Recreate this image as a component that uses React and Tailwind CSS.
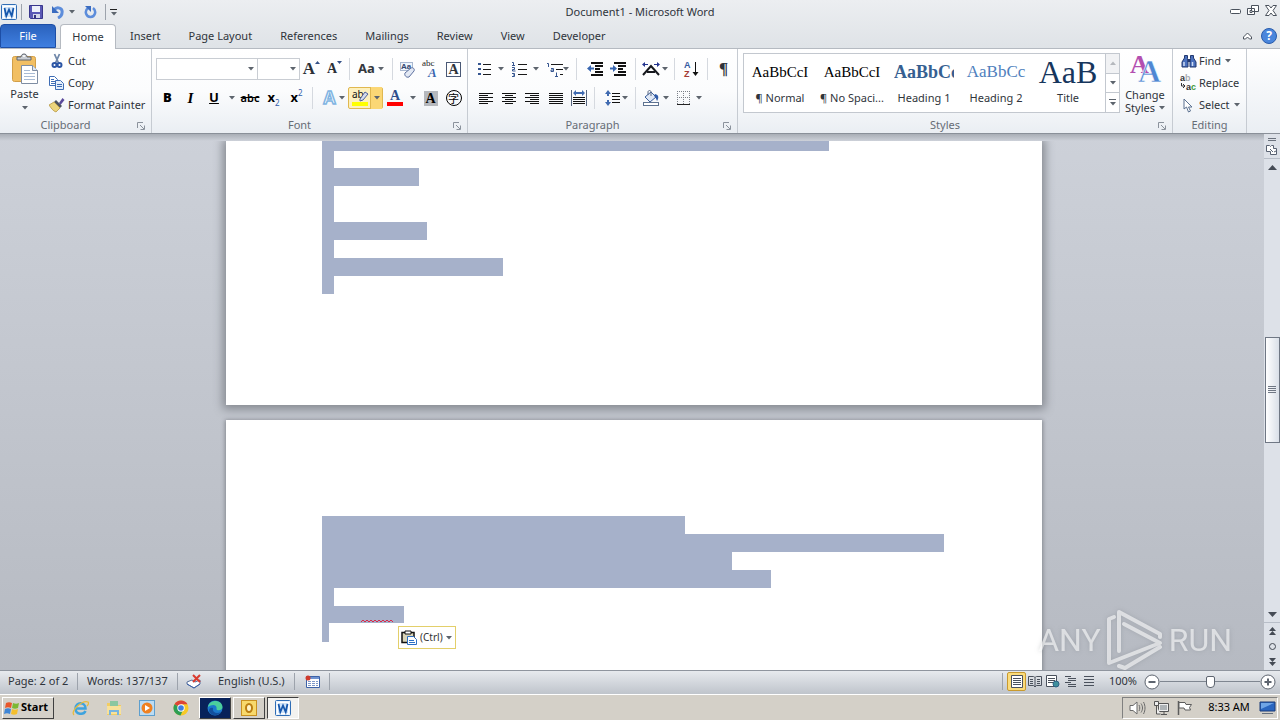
import React from "react";
import clsx from "clsx";

const TABS = ["Insert", "Page Layout", "References", "Mailings", "Review", "View", "Developer"];

// selected lines of the document, in px
const PAGE_ONE = [
  { h: 10, w: 507 },
  { h: 17, w: 12 },
  { h: 18, w: 97 },
  { h: 36, w: 12 },
  { h: 18, w: 105 },
  { h: 18, w: 12 },
  { h: 18, w: 181 },
  { h: 18, w: 12 },
];

const PAGE_TWO = [
  { h: 18, w: 363 },
  { h: 18, w: 622 },
  { h: 18, w: 410 },
  { h: 18, w: 449 },
  { h: 18, w: 12 },
  { h: 17, w: 82, typo: true },
  { h: 19, w: 7 },
];

const STYLES = [
  { name: "¶ Normal", sample: "AaBbCcI", cls: "justify-center text-[15px] text-black" },
  { name: "¶ No Spaci...", sample: "AaBbCcI", cls: "justify-center text-[15px] text-black" },
  { name: "Heading 1", sample: "AaBbCc", cls: "text-[18px] font-bold text-[#365f91]" },
  { name: "Heading 2", sample: "AaBbCc", cls: "justify-center text-[17px] text-[#4f81bd]" },
  { name: "Title", sample: "AaB", cls: "justify-center text-[32px] text-[#17365d]" },
];

const Caret = ({ className = "" }) => (
  <svg width="6" height="4" viewBox="0 0 6 4" className={clsx("shrink-0", className)}>
    <path d="M0 0h6L3 3.5z" fill="#5d646d" />
  </svg>
);

const Sep = ({ className }) => <span className={clsx("h-[22px] w-px shrink-0 bg-[#d5d9df]", className)} />;

const Tool = ({ label, className = "w-[23px]", children }) => (
  <button type="button" aria-label={label} className={clsx("flex h-[22px] shrink-0 items-center justify-center", className)}>
    {children}
  </button>
);

const Group = ({ title, launcher, className, children }) => (
  <section
    aria-label={title}
    className={clsx("flex shrink-0 flex-col border-r border-[#c6cbd2] bg-linear-to-b from-white via-[#fbfcfd] to-[#eaeef3]", className)}
  >
    <div className="flex h-[68px]">{children}</div>
    <div className="flex h-4 items-center pt-px text-[#666c75]">
      <span className="flex-1 text-center">{title}</span>
      {launcher && (
        <button type="button" aria-label={title + " options"} className="flex w-5 justify-center">
          <svg width="8" height="8" viewBox="0 0 8 8" fill="none" stroke="#8b929c">
            <path d="M.5 6V.5H6M3 3l4 4M7.500 3.500v4h-4" />
          </svg>
        </button>
      )}
    </div>
  </section>
);

const WordIcon = ({ size = 16 }) => (
  <svg width={size} height={size} viewBox="0 0 16 16">
    <rect x=".5" y=".5" width="15" height="15" rx="1" fill="#e9f3fd" stroke="#2f6db5" />
    <path d="M2.500 2.500h11v11h-11z" fill="#cfe3f8" stroke="#fff" />
    <path d="M3.500 4l1.800 8L8 5.500l2.700 6.500 1.800-8" fill="none" stroke="#1658ad" strokeWidth="1.800" />
  </svg>
);

const SaveIcon = () => (
  <svg width="14" height="14" viewBox="0 0 14 14">
    <path d="M.5.5h13v13h-12l-1-1z" fill="#5a58b5" stroke="#39378c" />
    <path d="M3 1h8v6H3z" fill="#eef1fa" />
    <path d="M4 9h7v4H4z" fill="#d5d8ea" />
    <path d="M5 10h2v3H5z" fill="#33317d" />
  </svg>
);

const UndoIcon = () => (
  <svg width="14" height="14" viewBox="0 0 14 14">
    <path d="M3 5c3-4 9-2 8 3 0 3-2 4-4 5" fill="none" stroke="#5d8ddb" strokeWidth="3" />
    <path d="M1 1v7h7z" fill="#3b6cc0" />
  </svg>
);

const RedoIcon = () => (
  <svg width="13" height="14" viewBox="0 0 13 14">
    <path d="M9 3c4 3 2 9-2.500 9S0 6 4 3" fill="none" stroke="#5d8ddb" strokeWidth="2.500" />
    <path d="M1 1h6v6z" fill="#3b6cc0" />
  </svg>
);

const PasteIcon = () => (
  <svg width="28" height="32" viewBox="0 0 28 32">
    <rect x="1.500" y="3.500" width="23" height="25" rx="2" fill="#f2bf63" stroke="#d29f48" />
    <path d="M6 7V4h4c0-4 6-4 6 0h4v3z" fill="#c9cdd3" stroke="#5e646e" />
    <circle cx="13" cy="3" r="1" fill="#fff" />
    <path d="M10.500 12.500h11l5 5v13h-16z" fill="#fff" stroke="#7e8da3" />
    <path d="M21.500 12.500v5h5" fill="#dfe7f1" stroke="#7e8da3" />
    <path d="M13 17.500h6M13 20.500h11M13 23.500h11M13 26.500h11" stroke="#a9bbd4" />
  </svg>
);

const CutIcon = () => (
  <svg width="16" height="16" viewBox="0 0 16 16" fill="none">
    <path d="M5.500 1l4 9M10.500 1L6.500 10" stroke="#7088aa" strokeWidth="1.800" />
    <circle cx="5.500" cy="12" r="2" stroke="#2c56a5" strokeWidth="2" />
    <circle cx="10.500" cy="12" r="2" stroke="#2c56a5" strokeWidth="2" />
  </svg>
);

const CopyIcon = () => (
  <svg width="16" height="16" viewBox="0 0 16 16" stroke="#3e6db5">
    <path d="M.5 1.500h5l3 3v6h-8z" fill="#fff" />
    <path d="M2 4.500h3M2 6.500h4M2 8.500h4" />
    <path d="M6.500 5.500h5l3 3v6h-8z" fill="#e4eefb" />
    <path d="M8 9.500h5M8 11.500h5" />
  </svg>
);

const PainterIcon = () => (
  <svg width="16" height="16" viewBox="0 0 16 16">
    <path d="M10 6l3.500-5 2 2-4 5z" fill="#5b4a9b" />
    <path d="M7 3l6 6-2 2-6-6z" fill="#4c5360" />
    <path d="M5 5l6 6-4 4C4 14 2 11 0 8z" fill="#ecd57c" stroke="#b08e35" strokeWidth=".7" />
  </svg>
);

const Grow = ({ down }) => (
  <span className="flex items-start font-[Liberation_Serif,serif] font-bold text-[#2b2f36]">
    <span className={clsx("leading-5", down ? "text-[14px]" : "text-[17px]")}>A</span>
    <svg width="5" height="4" viewBox="0 0 5 4" className="mt-0.5">
      <path d={down ? "M0 0h5L2.500 3z" : "M0 3h5L2.500 0z"} fill="#324f86" />
    </svg>
  </span>
);

const ClearIcon = () => (
  <svg width="17" height="17" viewBox="0 0 17 17" className="overflow-visible">
    <rect x="1.500" y="1.500" width="12" height="8" fill="#eef4fb" stroke="#a8b7cf" />
    <text x="2" y="8" fontSize="8" fontWeight="bold" fill="#32476f" fontFamily="Liberation Sans, sans-serif">Aa</text>
    <path d="M6 12l6-5c2-1 4 1 3 3l-5 6c-3 1-5-2-4-4z" fill="#e3e9f4" stroke="#5c6f9e" />
  </svg>
);

const PhoneticIcon = () => (
  <svg width="17" height="18" viewBox="0 0 17 18" className="overflow-visible">
    <text x="0" y="6" fontSize="9" fill="#222" fontFamily="Liberation Serif, serif">abc</text>
    <text x="6" y="17" fontSize="13" fontWeight="bold" fontStyle="italic" fill="#3a66b0" fontFamily="Liberation Serif, serif">A</text>
  </svg>
);

const HighlightIcon = () => (
  <svg width="18" height="18" viewBox="0 0 18 18" className="overflow-visible">
    <text x="1" y="9" fontSize="10" fill="#111" fontFamily="Noto Sans, sans-serif">ab</text>
    <path d="M9 10l5-7 3 2-5 6-3 1z" fill="#d4dcee" stroke="#51629b" />
    <path d="M1 13h16v4H1z" fill="#ff0" />
  </svg>
);

const FontColorIcon = () => (
  <svg width="16" height="18" viewBox="0 0 16 18" className="overflow-visible">
    <text x="3" y="11" fontSize="14" fontWeight="bold" fill="#2f4e8c" fontFamily="Liberation Serif, serif">A</text>
    <path d="M0 13h16v4H0z" fill="red" />
  </svg>
);

const BulletsIcon = () => (
  <svg width="14" height="14" viewBox="0 0 14 14">
    <path d="M0 1h3v2H0zM0 6h3v2H0zM0 11h3v2H0z" fill="#35558f" />
    <path d="M5 2.500h8M5 7.500h8M5 12.500h8" stroke="#1a1a1a" />
  </svg>
);

const NumberingIcon = () => (
  <svg width="15" height="15" viewBox="0 0 15 15">
    <path d="M0 .5h1.500V4M0 3.500h3M0 5.500h2.500v2H.5v1.500h3M0 11.500h2.500v3H0M1 13h1" fill="none" stroke="#35558f" />
    <path d="M6 2.500h9M6 7.500h9M6 12.500h9" stroke="#1a1a1a" />
  </svg>
);

const MultilevelIcon = () => (
  <svg width="16" height="15" viewBox="0 0 16 15">
    <path d="M0 1.500h1.500V5M4 6.500h2.500v3H4v-1.500h2M9.500 10.500v4M8 14.500h3" fill="none" stroke="#35558f" />
    <path d="M4 2.500h12M9 7.500h7M13 12.500h3" stroke="#1a1a1a" />
  </svg>
);

const IndentIcon = ({ right }) => (
  <svg width="16" height="14" viewBox="0 0 16 14">
    <path d="M4 1h12M4 13h12M8 4h8M8 7h5M8 10h8" stroke="#111" strokeWidth="1.800" />
    <path d={right ? "M7 6.500L3 3v2.500H0v2h3V10z" : "M0 6.500L4 3v2.500h3v2H4V10z"} fill="#3866b0" />
  </svg>
);

const ScaleIcon = () => (
  <svg width="18" height="14" viewBox="0 0 18 14">
    <path d="M1 13l8-9 8 9M5 10h8" fill="none" stroke="#16181d" strokeWidth="2" />
    <path d="M0 2.500L3 0v2h3v1H3v2zM18 2.500L15 0v2h-3v1h3v2z" fill="#23348f" />
  </svg>
);

const SortIcon = () => (
  <svg width="15" height="16" viewBox="0 0 15 16" className="overflow-visible">
    <text x="0" y="7" fontSize="9" fontWeight="bold" fill="#3459a0" fontFamily="Liberation Sans, sans-serif">A</text>
    <text x="0" y="16" fontSize="9" fontWeight="bold" fill="#a33a34" fontFamily="Liberation Sans, sans-serif">Z</text>
    <path d="M11.500 1v11" stroke="#111" />
    <path d="M8.500 11h6l-3 4z" fill="#111" />
  </svg>
);

const ALIGN = {
  left: "M0 .5h14M0 2.500h9M0 4.500h14M0 6.500h9M0 8.500h14M0 10.500h9",
  center: "M0 .5h14M3 2.500h8M0 4.500h14M3 6.500h8M0 8.500h14M3 10.500h8",
  right: "M0 .5h14M5 2.500h9M0 4.500h14M5 6.500h9M0 8.500h14M5 10.500h9",
  full: "M0 .5h14M0 2.500h14M0 4.500h14M0 6.500h14M0 8.500h14M0 10.500h14",
};

const AlignIcon = ({ kind }) => (
  <svg width="14" height="11" viewBox="0 0 14 11">
    <path d={ALIGN[kind]} stroke="#111" />
  </svg>
);

const DistributeIcon = () => (
  <svg width="16" height="16" viewBox="0 0 16 16">
    <path d="M.5 0v16M15.500 0v16" stroke="#56657f" />
    <path d="M2 3l3-3v2h6V0l3 3-3 3V4H5v2z" fill="#3f6ab0" />
    <path d="M2 7.500h12M2 9.500h12M2 11.500h12M2 13.500h12" stroke="#111" />
  </svg>
);

const SpacingIcon = () => (
  <svg width="15" height="16" viewBox="0 0 15 16">
    <path d="M3 0l3 4H4v2H2V4H0zM3 16l3-4H4v-2H2v2H0z" fill="#3f6ab0" />
    <path d="M7 3.500h8M7 6.500h8M7 9.500h8M7 12.500h8" stroke="#111" />
  </svg>
);

const ShadingIcon = () => (
  <svg width="16" height="16" viewBox="0 0 16 16">
    <path d="M2 7l6-5 5 5-6 5z" fill="#dfe8f6" stroke="#3b5f9c" />
    <path d="M5 5V2c0-2 3-2 3 0v4" fill="none" stroke="#5b6a85" />
    <path d="M12 4c4 1 4 4 2 7-1-2-1-4-3-5z" fill="#2f5ba8" />
    <rect x=".5" y="12.500" width="15" height="3" fill="#fff" stroke="#5e7391" />
  </svg>
);

const BordersIcon = () => (
  <svg width="13" height="14" viewBox="0 0 13 14">
    <path d="M0 .5h13M0 6.500h13M.5 0v13M6.500 0v13M12.500 0v13" stroke="#7b8088" strokeDasharray="1 1" />
    <path d="M0 13.500h13" stroke="#222" />
  </svg>
);

const BinocularsIcon = () => (
  <svg width="16" height="14" viewBox="0 0 16 14">
    <path d="M3.500 1.500h3v3l.5 2v6.500H1V8l2.500-4zM9.500 1.500h3V4L15 8v5H9V6.500l.5-2z" fill="#4a70bd" stroke="#22386f" />
    <path d="M6.500 5h3v3h-3z" fill="#22386f" />
    <path d="M3 8v4M11.500 8v4" stroke="#cfdcf4" strokeWidth="1.500" />
  </svg>
);

const ReplaceIcon = () => (
  <svg width="17" height="16" viewBox="0 0 17 16" fontFamily="Liberation Sans, sans-serif" fontWeight="bold" fontSize="9" className="overflow-visible">
    <text x="0" y="6" fill="#333">a</text>
    <text x="5" y="6" fill="#a8acb2">b</text>
    <path d="M1.500 8v3H4M3 9l2 2-2 2" fill="none" stroke="#333" />
    <text x="6" y="15" fill="#333">a</text>
    <text x="11" y="15" fill="#3f9a3c">c</text>
  </svg>
);

const CursorIcon = () => (
  <svg width="11" height="15" viewBox="0 0 11 15">
    <path d="M1 1v10l2.500-2 2 5 2-1-2-4H9z" fill="#fff" stroke="#5b7190" />
  </svg>
);

const ChangeStylesIcon = () => (
  <svg width="31" height="30" viewBox="0 0 31 30" fontFamily="Liberation Serif, serif" fontWeight="bold" className="overflow-visible">
    <text x="0" y="19" fontSize="26" fill="#b34fb0">A</text>
    <text x="8" y="28" fontSize="32" fill="#4f87d3" stroke="#fff" strokeWidth=".5">A</text>
  </svg>
);

const Ribbon = () => (
  <div className="flex h-[86px] shrink-0 border-t border-b border-t-[#b5bac1] border-b-[#8a9099] bg-linear-to-b from-white to-[#eaeef3]">
    <Group title="Clipboard" launcher className="w-[152px]">
      <button type="button" className="flex w-[49px] flex-col items-center pt-1">
        <PasteIcon />
        <span className="mt-px leading-4">Paste</span>
        <Caret className="mt-1" />
      </button>
      <div className="flex flex-col pt-px">
        {[["Cut", CutIcon], ["Copy", CopyIcon], ["Format Painter", PainterIcon]].map(([label, Icon]) => (
          <button key={label} type="button" className="flex h-[22px] items-center gap-[3px]">
            <Icon />
            {label}
          </button>
        ))}
      </div>
    </Group>

    <Group title="Font" launcher className="w-[316px]">
      <div className="flex flex-col gap-[7px] pt-[9px] pl-1">
        <div className="flex h-[22px] items-center">
          {[["Font name", "w-[102px]"], ["Font size", "-ml-px w-[43px]"]].map(([label, width]) => (
            <span key={label} className={clsx("grid h-[22px] items-center", width)}>
              <select aria-label={label} className="col-start-1 row-start-1 h-[22px] w-full appearance-none border border-[#c9cdd3] bg-white px-1">
                <option></option>
              </select>
              <Caret className="pointer-events-none col-start-1 row-start-1 mr-1 justify-self-end" />
            </span>
          ))}
          <Tool label="Grow font"><Grow /></Tool>
          <Tool label="Shrink font"><Grow down /></Tool>
          <Sep className="mx-[3px]" />
          <Tool label="Change case" className="w-9 gap-[3px]">
            <span className="text-[13px] font-bold text-[#33373d]">Aa</span>
            <Caret />
          </Tool>
          <Sep className="mr-[3px] ml-[3px]" />
          <Tool label="Clear formatting"><ClearIcon /></Tool>
          <Tool label="Phonetic guide"><PhoneticIcon /></Tool>
          <Tool label="Character border">
            <span className="flex h-[15px] w-[15px] items-center justify-center border border-[#4a5875] font-[Liberation_Serif,serif] text-[14px] leading-[13px] font-bold">A</span>
          </Tool>
        </div>
        <div className="flex h-[22px] items-center text-black">
          <Tool label="Bold"><b className="text-[13px] font-black">B</b></Tool>
          <Tool label="Italic"><i className="font-[Liberation_Serif,serif] text-[15px] font-bold">I</i></Tool>
          <Tool label="Underline" className="w-6"><u className="text-[13px] font-bold">U</u></Tool>
          <Tool label="Underline style" className="w-3"><Caret /></Tool>
          <Tool label="Strikethrough" className="w-6"><s className="text-[11px] font-semibold">abc</s></Tool>
          <Tool label="Subscript">
            <b className="text-[13px]">x</b>
            <span className="self-end text-[8px] leading-3 text-[#2f5ba8]">2</span>
          </Tool>
          <Tool label="Superscript">
            <b className="text-[13px]">x</b>
            <span className="self-start text-[8px] leading-3 text-[#2f5ba8]">2</span>
          </Tool>
          <Sep className="mr-[5px] ml-1" />
          <Tool label="Text effects" className="w-[30px] gap-[2px]">
            <svg width="16" height="16" viewBox="0 0 16 16" className="overflow-visible">
              <text x="2" y="14" fontSize="18" fontWeight="bold" fill="#fff" stroke="#80b4e2" strokeWidth="1.500" fontFamily="Liberation Sans, sans-serif">A</text>
            </svg>
            <Caret />
          </Tool>
          <span className="flex h-[22px] w-[35px] rounded-xs border border-[#e0b850] bg-[#fdf0bd]">
            <Tool label="Highlight" className="-mt-px w-[21px]"><HighlightIcon /></Tool>
            <Tool label="Highlight colour" className="-mt-px w-3 border-l border-[#e0b850] bg-[#fbd775]"><Caret /></Tool>
          </span>
          <Tool label="Font color" className="w-6"><FontColorIcon /></Tool>
          <Tool label="Font color menu" className="w-3"><Caret /></Tool>
          <Tool label="Character shading">
            <span className="flex h-[15px] w-[14px] items-center justify-center bg-[#b5b8bd] font-[Liberation_Serif,serif] text-[14px] leading-[15px] font-bold">A</span>
          </Tool>
          <Tool label="Enclose characters">
            <span className="flex h-4 w-4 items-center justify-center rounded-full border border-black font-[Noto_Sans_CJK_JP,sans-serif] text-[11px] leading-3">字</span>
          </Tool>
        </div>
      </div>
    </Group>

    <Group title="Paragraph" launcher className="w-[270px]">
      <div className="flex flex-col gap-[7px] pt-[9px] pl-[6px]">
        <div className="flex h-[22px] items-center">
          <Tool label="Bullets" className="w-[34px] gap-1.5"><BulletsIcon /><Caret /></Tool>
          <Tool label="Numbering" className="w-[34px] gap-1.5"><NumberingIcon /><Caret /></Tool>
          <Tool label="Multilevel list" className="w-[32px]"><MultilevelIcon /><Caret /></Tool>
          <Sep className="ml-[2px]" />
          <Tool label="Decrease indent" className="ml-[6px] w-[23px]"><IndentIcon /></Tool>
          <Tool label="Increase indent"><IndentIcon right /></Tool>
          <Sep className="mr-1 ml-[6px]" />
          <Tool label="Asian layout" className="w-[30px] gap-0.5"><ScaleIcon /><Caret /></Tool>
          <Sep className="mx-1" />
          <Tool label="Sort" className="w-6"><SortIcon /></Tool>
          <Sep className="mx-1" />
          <Tool label="Show marks"><span className="font-[Liberation_Serif,serif] text-[17px] font-bold">¶</span></Tool>
        </div>
        <div className="flex h-[22px] items-center">
          <Tool label="Align left"><AlignIcon kind="left" /></Tool>
          <Tool label="Center"><AlignIcon kind="center" /></Tool>
          <Tool label="Align right" className="w-6"><AlignIcon kind="right" /></Tool>
          <Tool label="Justify"><AlignIcon kind="full" /></Tool>
          <Tool label="Distribute" className="w-6"><DistributeIcon /></Tool>
          <Sep className="mr-[5px] ml-[3px]" />
          <Tool label="Line spacing" className="w-[32px] gap-0.5"><SpacingIcon /><Caret /></Tool>
          <Sep className="mx-[3px]" />
          <Tool label="Shading" className="w-[34px] gap-1"><ShadingIcon /><Caret /></Tool>
          <Tool label="Borders" className="w-[32px] gap-[6px]"><BordersIcon /><Caret /></Tool>
        </div>
      </div>
    </Group>

    <Group title="Styles" launcher className="w-[435px]">
      <div className="mt-1 ml-[5px] flex h-[60px] w-[377px] border border-[#c3c8cf] bg-white">
        {STYLES.map((style) => (
          <button key={style.name} type="button" className="flex w-[72px] flex-col items-center overflow-hidden">
            <span className={clsx("flex h-9 w-[60px] items-center overflow-hidden font-[Liberation_Serif,serif] leading-9 whitespace-nowrap", style.cls)}>
              {style.sample}
            </span>
            <span className="leading-4 whitespace-nowrap">{style.name}</span>
          </button>
        ))}
        <div className="ml-auto flex w-[14px] flex-col divide-y divide-[#c3c8cf] border-l border-[#c3c8cf]">
          <button type="button" aria-label="Previous styles" className="flex flex-1 items-center justify-center bg-[#f1f2f4]">
            <Caret className="rotate-180 opacity-40" />
          </button>
          <button type="button" aria-label="Next styles" className="flex flex-1 items-center justify-center"><Caret /></button>
          <button type="button" aria-label="More styles" className="flex flex-1 flex-col items-center justify-center gap-0.5">
            <span className="h-px w-[7px] bg-[#5d646d]" />
            <Caret />
          </button>
        </div>
      </div>
      <button type="button" className="flex w-[50px] flex-col items-center pt-[5px] leading-[13px]">
        <ChangeStylesIcon />
        <span className="mt-1">Change</span>
        <span className="flex items-center gap-1">Styles <Caret /></span>
      </button>
    </Group>

    <Group title="Editing" className="w-[74px]">
      <div className="flex flex-col pt-px pl-[7px]">
        {[["Find", BinocularsIcon, true], ["Replace", ReplaceIcon, false], ["Select", CursorIcon, true]].map(([label, Icon, menu]) => (
          <button key={label} type="button" className="flex h-[22px] items-center">
            <span className="mr-0.5 flex w-[17px] shrink-0 justify-center"><Icon /></span>
            {label}
            {menu && <Caret className="ml-1" />}
          </button>
        ))}
      </div>
    </Group>
  </div>
);

const Selection = ({ lines }) => (
  <div className="pl-24">
    {lines.map((line, i) => (
      <div key={i} className="relative bg-[#a6b1ca]" style={{ width: line.w, height: line.h }}>
        {line.typo && (
          <svg width="32" height="3" viewBox="0 0 32 3" className="absolute bottom-0 left-[39px]">
            <path d="M0 2l2-2 2 2 2-2 2 2 2-2 2 2 2-2 2 2 2-2 2 2 2-2 2 2 2-2 2 2 2-2 2 2" fill="none" stroke="#d8284a" />
          </svg>
        )}
      </div>
    ))}
  </div>
);

const PasteTag = () => (
  <button type="button" className="absolute top-[206px] left-[172px] flex h-[23px] w-[58px] items-center gap-[3px] border border-[#e3cf6a] bg-white pl-[2px] text-[10px] text-[#333]">
    <svg width="16" height="15" viewBox="0 0 16 15">
      <path d="M1 2.500h12v10H1z" fill="#d9d4b8" stroke="#111" strokeWidth="1.500" />
      <path d="M4 1h6v3H4z" fill="#fff" stroke="#111" />
      <path d="M6.500 6.500h6l3 3v5h-9z" fill="#fff" stroke="#2b6fc4" />
      <path d="M8 10.500h5M8 12.500h6" stroke="#2b6fc4" />
    </svg>
    (Ctrl)
    <Caret />
  </button>
);

const Watermark = () => (
  <div className="pointer-events-none absolute right-[32px] bottom-0 flex h-[60px] items-center gap-[6px] font-[Roboto,sans-serif] text-[32px] text-white/60 [filter:drop-shadow(0_0_2px_rgba(110,115,122,0.5))]">
    <span>ANY</span>
    <svg width="56" height="62" viewBox="0 0 56 62" fill="none" stroke="#fff" strokeOpacity=".6" strokeWidth="4" strokeLinecap="round" strokeLinejoin="round">
      <path d="M7 8l-5 2v44l51-20L17 15" />
      <path d="M12 42V3l41 22v3" />
      <path d="M12 57l6 2 35-21" />
    </svg>
    <span>RUN</span>
  </div>
);

const Scrollbar = () => (
  <div className="flex w-4 shrink-0 flex-col items-center bg-[#dde1e8] text-[#454b55]">
    <span className="mt-1 h-[3px] w-2 border-y border-[#6b727d]" />
    <button type="button" aria-label="Ruler" className="flex h-[18px] w-full items-center justify-center border-b border-[#b8bec8]">
      <svg width="12" height="12" viewBox="0 0 12 12" fill="#fff" stroke="#596272">
        <path d="M.5 1.500h3l1 1 1-1h2v3h3v6h-6v-3h-4z" />
        <path d="M4 5l3 3M8 8l2-1" />
      </svg>
    </button>
    <button type="button" aria-label="Scroll up" className="flex h-4 items-center">
      <svg width="9" height="5" viewBox="0 0 9 5"><path d="M0 5h9L4.500 0z" fill="currentColor" /></svg>
    </button>
    <span className="grow-[162]" />
    <span className="flex h-[106px] w-[15px] flex-col items-center justify-center gap-px border border-[#6f7784] bg-linear-to-r from-white to-[#d9dfe8]">
      {[0, 1, 2, 3].map((n) => <span key={n} className="h-px w-2 bg-[#6f7784]" />)}
    </span>
    <span className="grow-[165]" />
    <button type="button" aria-label="Scroll down" className="flex h-[15px] items-center">
      <svg width="9" height="5" viewBox="0 0 9 5"><path d="M0 0h9L4.500 5z" fill="currentColor" /></svg>
    </button>
    <button type="button" aria-label="Previous page" className="flex h-4 w-full items-center justify-center border-t border-[#b8bec8]">
      <svg width="7" height="8" viewBox="0 0 7 8"><path d="M0 4h7L3.500 0zM0 8h7L3.500 4z" fill="currentColor" /></svg>
    </button>
    <button type="button" aria-label="Browse object" className="flex h-4 items-center">
      <span className="h-[7px] w-[7px] rounded-full border border-[#454b55]" />
    </button>
    <button type="button" aria-label="Next page" className="flex h-4 items-center">
      <svg width="7" height="8" viewBox="0 0 7 8"><path d="M0 0h7L3.500 4zM0 4h7L3.500 8z" fill="currentColor" /></svg>
    </button>
  </div>
);

const VIEWS = [
  ["Print layout", "M1.500.5h11v12h-11zM3 3.500h8M3 5.500h8M3 7.500h8M3 9.500h8"],
  ["Full screen reading", "M.5 1.500h5l1.500 1 1.500-1h5v9h-5L7 12l-1.500-1.500h-5zM7 3v8M2 4.500h3M2 6.500h3M2 8.500h3M9 4.500h3M9 6.500h3M9 8.500h3"],
  ["Web layout", "M.5.5h10v11H.5zM2 3.500h7M2 5.500h7M2 7.500h5"],
  ["Outline", "M1 1.500h6M4 3.500h8M4 5.500h8M1 7.500h6M4 9.500h8M4 11.500h8"],
  ["Draft", "M2 1.500h10M2 4.500h10M2 7.500h10M2 10.500h10"],
];

const StatusSep = () => <span className="h-[17px] w-px bg-[#9da3ac]" />;

const StatusBar = () => (
  <footer className="flex h-6 shrink-0 items-center border-t border-[#8f959e] bg-linear-to-b from-[#e7eaee] to-[#bfc4cb] pb-0.5">
    <button type="button" className="w-[77px] pl-2 text-left whitespace-nowrap">Page: 2 of 2</button>
    <StatusSep />
    <button type="button" className="w-[99px] pl-[9px] text-left whitespace-nowrap">Words: 137/137</button>
    <StatusSep />
    <button type="button" aria-label="Proofing errors" className="flex w-[31px] justify-center">
      <svg width="16" height="15" viewBox="0 0 16 15">
        <path d="M1 8l5-2 3 2 5-2v4l-6 4-7-4z" fill="#fff" stroke="#566f9c" />
        <path d="M1 10l7 4 6-4" fill="none" stroke="#3c62a8" />
        <path d="M7 1l7 7M14 1L7 8" stroke="#da3b2f" strokeWidth="2" />
      </svg>
    </button>
    <button type="button" className="w-[85px] pl-[9px] text-left whitespace-nowrap">English (U.S.)</button>
    <StatusSep />
    <button type="button" aria-label="Record macro" className="flex w-[34px] justify-center">
      <svg width="15" height="14" viewBox="0 0 15 14">
        <path d="M1.500 1.500h13v11h-13z" fill="#fff" stroke="#3c62a8" />
        <path d="M2 2h12v2H2z" fill="#6f93d1" />
        <path d="M3 6.500h10M3 8.500h10M3 10.500h10" stroke="#7d98c9" strokeDasharray="3 1" />
        <circle cx="3" cy="3" r="2.500" fill="#cf3a2c" />
      </svg>
    </button>
    <StatusSep />
    <div className="ml-auto flex items-center">
      <StatusSep />
      <div className="ml-1 flex">
        {VIEWS.map(([label, d], i) => (
          <button
            key={label}
            type="button"
            aria-label={label}
            className={clsx(
              "flex h-[19px] items-center justify-center",
              i === 0 ? "w-[19px] rounded-xs border border-[#c99a2e] bg-[#fbdc7c]" : "w-[18px]"
            )}
          >
            <svg width="14" height="13" viewBox="0 0 14 13" fill={i === 0 || i === 2 ? "#fff" : "none"} stroke="#4a515c">
              <path d={d} />
              {i === 2 && <circle cx="10" cy="9" r="3" fill="#3f8f9c" stroke="#2d6184" />}
            </svg>
          </button>
        ))}
      </div>
      <button type="button" className="w-[46px] pl-1 text-center">100%</button>
      <button type="button" aria-label="Zoom out">
        <svg width="16" height="16" viewBox="0 0 16 16" fill="#fff" stroke="#5d646f">
          <circle cx="8" cy="8" r="7" />
          <path d="M4.500 8h7" strokeWidth="2" />
        </svg>
      </button>
      <input
        type="range"
        aria-label="Zoom"
        defaultValue="50"
        className="h-4 w-[100px] appearance-none bg-[linear-gradient(#7f8690,#7f8690)] bg-[length:100%_1px] bg-center bg-no-repeat [&::-webkit-slider-thumb]:h-3 [&::-webkit-slider-thumb]:w-[9px] [&::-webkit-slider-thumb]:appearance-none [&::-webkit-slider-thumb]:rounded-t-xs [&::-webkit-slider-thumb]:rounded-b-[4px] [&::-webkit-slider-thumb]:border [&::-webkit-slider-thumb]:border-[#5d646f] [&::-webkit-slider-thumb]:bg-white"
      />
      <button type="button" aria-label="Zoom in" className="mr-1">
        <svg width="16" height="16" viewBox="0 0 16 16" fill="#fff" stroke="#5d646f">
          <circle cx="8" cy="8" r="7" />
          <path d="M4.500 8h7M8 4.500v7" strokeWidth="2" />
        </svg>
      </button>
    </div>
  </footer>
);

const Taskbar = () => (
  <nav className="flex h-[26px] shrink-0 items-center border-t border-white bg-[#d4d0c8] text-black">
    <button type="button" className="ml-[2px] flex h-[22px] w-[52px] items-center gap-px border border-t-white border-r-[#404040] border-b-[#404040] border-l-white pl-px text-[11px] font-bold">
      <svg width="16" height="16" viewBox="0 0 16 16">
        <path d="M2 3c2-1 4-1 6 0L7 8C5 7 3 7 1 8z" fill="#e8572b" />
        <path d="M9 3c2 1 4 1 6 0l-1 5c-2 1-4 1-6 0z" fill="#7cb833" />
        <path d="M1 9c2-1 4-1 6 0l-1 5c-2-1-4-1-6 0z" fill="#3f86d6" />
        <path d="M8 9c2 1 4 1 6 0l-1 5c-2 1-4 1-6 0z" fill="#f5bf2c" />
      </svg>
      Start
    </button>
    <div className="ml-[9px] flex">
      <button type="button" aria-label="Internet Explorer" className="flex w-[34px] justify-center">
        <svg width="17" height="16" viewBox="0 0 17 16" fill="none">
          <path d="M4 8.500h9.500c0-7-10-7-10 0 0 6 8 7 10 2.500" stroke="#3ea3de" strokeWidth="2.500" />
          <path d="M2 15c-4-4 8-15 14-13 1 1 0 3-1 4" stroke="#e7bb3c" strokeWidth="1.300" />
        </svg>
      </button>
      <button type="button" aria-label="Explorer" className="flex w-[33px] justify-center">
        <svg width="16" height="16" viewBox="0 0 16 16">
          <path d="M1 3h6l1 2h7v10H1z" fill="#f2cd62" />
          <path d="M4 1h8v5H4z" fill="#8ac7a0" />
          <path d="M1 6h14v8H1z" fill="#f8e19a" />
          <path d="M3 15v-5h10v5h-2v-3H5v3z" fill="#78b5df" />
        </svg>
      </button>
      <button type="button" aria-label="Media Player" className="flex w-[34px] justify-center">
        <svg width="16" height="16" viewBox="0 0 16 16">
          <rect x=".5" y=".5" width="15" height="15" fill="#bcdcf3" stroke="#5e9fce" />
          <circle cx="8" cy="8" r="5.500" fill="#ef8121" />
          <path d="M6 5l5 3-5 3z" fill="#fff" />
        </svg>
      </button>
      <button type="button" aria-label="Chrome" className="flex w-[34px] justify-center">
        <svg width="16" height="16" viewBox="0 0 16 16">
          <circle cx="8" cy="8" r="7.500" fill="#f6c927" />
          <path d="M8 8L1.500 4.200A7.500 7.500 0 0114.500 4.200H8z" fill="#dc4437" />
          <path d="M8 8L1.500 4.200A7.500 7.500 0 007.500 15.500L10 10z" fill="#2d9e54" />
          <circle cx="8" cy="8" r="3.700" fill="#fff" />
          <circle cx="8" cy="8" r="2.800" fill="#3d7de0" />
        </svg>
      </button>
    </div>
    <div className="ml-px flex gap-[2px]">
      <button type="button" aria-label="Edge" className="flex h-[22px] w-8 items-center justify-center border border-t-white border-r-[#404040] border-b-[#404040] border-l-white bg-[#08225a]">
        <svg width="16" height="16" viewBox="0 0 16 16">
          <circle cx="8" cy="8" r="7.500" fill="#1b79cd" />
          <path d="M1 7C2-1 15-1 15.500 7c0 4-6 4-6 2 1-5-5-5-8.500-2z" fill="#4bcf9c" />
          <path d="M6 8c-1 5 4 6 8 4-3 5-11 4-12-1 0-3 2-4 4-3z" fill="#124f9e" />
        </svg>
      </button>
      <button type="button" aria-label="Outlook" className="flex h-[22px] w-8 items-center justify-center border border-t-white border-r-[#404040] border-b-[#404040] border-l-white">
        <svg width="16" height="16" viewBox="0 0 16 16">
          <rect x=".5" y=".5" width="15" height="15" fill="#f8d96b" stroke="#c99120" />
          <ellipse cx="8" cy="8" rx="3" ry="4" fill="#fff4c9" stroke="#bb7e11" strokeWidth="2" />
        </svg>
      </button>
      <button type="button" aria-label="Word" className="flex h-[22px] w-8 items-center justify-center border border-t-[#404040] border-r-white border-b-white border-l-[#404040] bg-[#f3f2ef]">
        <WordIcon />
      </button>
    </div>
    <div className="mr-[2px] ml-auto flex h-[22px] w-[156px] items-center border border-t-[#808080] border-r-white border-b-white border-l-[#808080] pl-[6px]">
      <svg width="17" height="16" viewBox="0 0 17 16" fill="#fff" stroke="#6b6b6b">
        <path d="M1 5.500h3L8 2v12l-4-3.500H1z" />
        <path d="M10 5c1 2 1 4 0 6M12 3.500c2 3 2 6 0 9M14.500 2c2 4 2 8 0 12" fill="none" />
      </svg>
      <svg width="17" height="16" viewBox="0 0 17 16" fill="#eee" stroke="#555" className="ml-[7px]">
        <path d="M5.500 3.500h10v8h-10zM8 14.500h6M11 12v2" />
        <path d="M1.500 1.500h4v4h-4zM3.500 6v8h4" />
        <path d="M7 5h7v5H7z" fill="#aeb3b6" stroke="none" />
      </svg>
      <svg width="16" height="16" viewBox="0 0 16 16" fill="#fff" stroke="#5c5c5c" className="ml-[7px]">
        <path d="M1.500 1v14" strokeWidth="1.500" />
        <path d="M2 2.500h6l1 2h5.500l-2 3 1 2.500H8L7 8H2z" />
      </svg>
      <span className="flex-1 pl-[6px] text-center whitespace-nowrap">8:33 AM</span>
      <svg width="17" height="14" viewBox="0 0 17 14" className="mr-px">
        <path d="M1 1h15v9H1z" fill="#2a66c0" stroke="#1c3c78" />
        <path d="M2 2h13L2 8z" fill="#6fa5e6" />
        <path d="M3 12h11v1H3z" fill="#66707d" />
      </svg>
    </div>
  </nav>
);

const App = () => {
  return (
    <div className="flex h-screen flex-col overflow-hidden bg-[#e0e4e8] font-[Noto_Sans,sans-serif] text-[11px] text-[#2f343b]">
      <header className="shrink-0 bg-linear-to-b from-[#eceef1] to-[#dfe3e7]">
        <div className="grid h-6 grid-cols-[1fr_auto_1fr] items-center">
          <div className="flex items-center pl-[1px]">
            <WordIcon />
            <span className="ml-1 h-4 w-px bg-[#9da3ac]" />
            <button type="button" aria-label="Save" className="ml-[7px]"><SaveIcon /></button>
            <button type="button" aria-label="Undo" className="ml-2 flex items-center gap-1"><UndoIcon /><Caret /></button>
            <button type="button" aria-label="Redo" className="ml-[9px]"><RedoIcon /></button>
            <span className="ml-2 h-4 w-px bg-[#9da3ac]" />
            <button type="button" aria-label="Customize toolbar" className="ml-1 flex flex-col items-center gap-0.5">
              <span className="h-px w-[7px] bg-[#222]" />
              <Caret />
            </button>
          </div>
          <h1>Document1 - Microsoft Word</h1>
          <div className="flex items-center justify-end gap-[6px] pr-[3px] pb-1">
            <button type="button" aria-label="Minimize">
              <svg width="11" height="12" viewBox="0 0 11 12"><rect x=".5" y="5.500" width="10" height="4" rx="1" fill="#fff" stroke="#4b525d" /></svg>
            </button>
            <button type="button" aria-label="Restore">
              <svg width="12" height="12" viewBox="0 0 12 12" fill="#fff" stroke="#4b525d">
                <path d="M4.500 1.500h7v6h-7zM.5 4.500h7v6h-7z" />
                <path d="M3 6.500h2v2H3z" />
              </svg>
            </button>
            <button type="button" aria-label="Close">
              <svg width="12" height="11" viewBox="0 0 12 11" fill="#fff" stroke="#4b525d">
                <path d="M.5.5h3.500l2 2.500L8 .5h3.500L8 5.500l3.500 5H8L6 8l-2 2.500H.5l3.500-5z" />
              </svg>
            </button>
          </div>
        </div>
        <div className="flex h-6 items-end">
          <button type="button" className="h-6 w-14 rounded-t-sm border border-[#1d4ea6] bg-linear-to-b from-[#2b62bd] to-[#3f7fe0] text-white">File</button>
          <button type="button" className="relative -mb-px ml-1 h-[25px] w-14 rounded-t-sm border border-b-0 border-[#b5bac1] bg-white">Home</button>
          {TABS.map((tab) => (
            <button key={tab} type="button" className="h-6 px-[14px] whitespace-nowrap">{tab}</button>
          ))}
          <button type="button" aria-label="Collapse ribbon" className="mr-[9px] ml-auto self-center">
            <svg width="9" height="8" viewBox="0 0 9 8" fill="#fff" stroke="#4b525d"><path d="M.5 5l4-4 4 4v2h-2l-2-2-2 2h-2z" /></svg>
          </button>
          <button type="button" aria-label="Help" className="mr-[3px] mb-1 h-4 w-4 rounded-full border border-[#2a5cab] bg-[#4a86dc] text-[12px] leading-[14px] font-bold text-white">?</button>
        </div>
      </header>

      <Ribbon />

      <div className="flex min-h-0 flex-1">
        <main className="relative flex min-w-0 flex-1 flex-col items-center gap-[15px] overflow-hidden bg-linear-to-b from-[#cdd1d9] to-[#b6bac2] pt-[7px] pl-1">
          <article className="h-[264px] w-[816px] shrink-0 bg-white shadow-[0_1px_9px_3px_#84888f]">
            <Selection lines={PAGE_ONE} />
          </article>
          <article className="relative h-[1056px] w-[816px] shrink-0 bg-white pt-24 shadow-[0_1px_4px_1px_#84888f]">
            <Selection lines={PAGE_TWO} />
            <PasteTag />
          </article>
          <div className="absolute inset-x-0 top-0 h-[7px] bg-linear-to-b from-[#a9aeb6] to-[#cdd1d9]" />
          <Watermark />
        </main>
        <Scrollbar />
      </div>

      <StatusBar />
      <Taskbar />
    </div>
  );
};

export default App;
